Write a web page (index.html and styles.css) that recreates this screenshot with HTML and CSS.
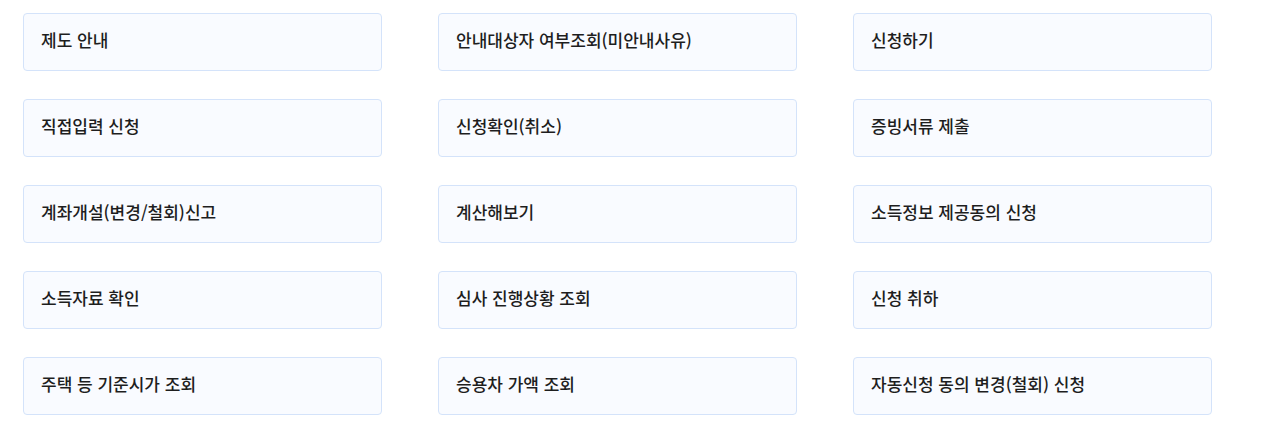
FILE: index.html
```html
<!DOCTYPE html>
<html lang="ko">
<head>
<meta charset="utf-8">
<link rel="stylesheet" href="styles.css">
</head>
<body>
<div class="grid">
  <a class="item"><span>제도 안내</span></a>
  <a class="item"><span>안내대상자 여부조회(미안내사유)</span></a>
  <a class="item"><span>신청하기</span></a>
  <a class="item"><span>직접입력 신청</span></a>
  <a class="item"><span>신청확인(취소)</span></a>
  <a class="item"><span>증빙서류 제출</span></a>
  <a class="item"><span>계좌개설(변경/철회)신고</span></a>
  <a class="item"><span>계산해보기</span></a>
  <a class="item"><span>소득정보 제공동의 신청</span></a>
  <a class="item"><span>소득자료 확인</span></a>
  <a class="item"><span>심사 진행상황 조회</span></a>
  <a class="item"><span>신청 취하</span></a>
  <a class="item"><span>주택 등 기준시가 조회</span></a>
  <a class="item"><span>승용차 가액 조회</span></a>
  <a class="item"><span>자동신청 동의 변경(철회) 신청</span></a>
</div>
</body>
</html>
```
FILE: styles.css
```css
html, body {
  margin: 0;
  padding: 0;
  background: #ffffff;
}
body {
  padding: 13px 23px;
  font-family: "Noto Sans CJK KR", "Noto Sans", sans-serif;
}
.grid {
  display: grid;
  grid-template-columns: repeat(3, 359px);
  column-gap: 56px;
  row-gap: 28px;
}
.item {
  box-sizing: border-box;
  height: 58px;
  display: flex;
  align-items: center;
  padding: 0 17px 4px;
  border: 1px solid #d4e3fa;
  border-radius: 4px;
  background: #f9fbff;
  color: #1e1e1e;
  font-size: 17px;
  line-height: 24px;
  font-weight: 500;
  text-decoration: none;
  letter-spacing: 0;
}
```
